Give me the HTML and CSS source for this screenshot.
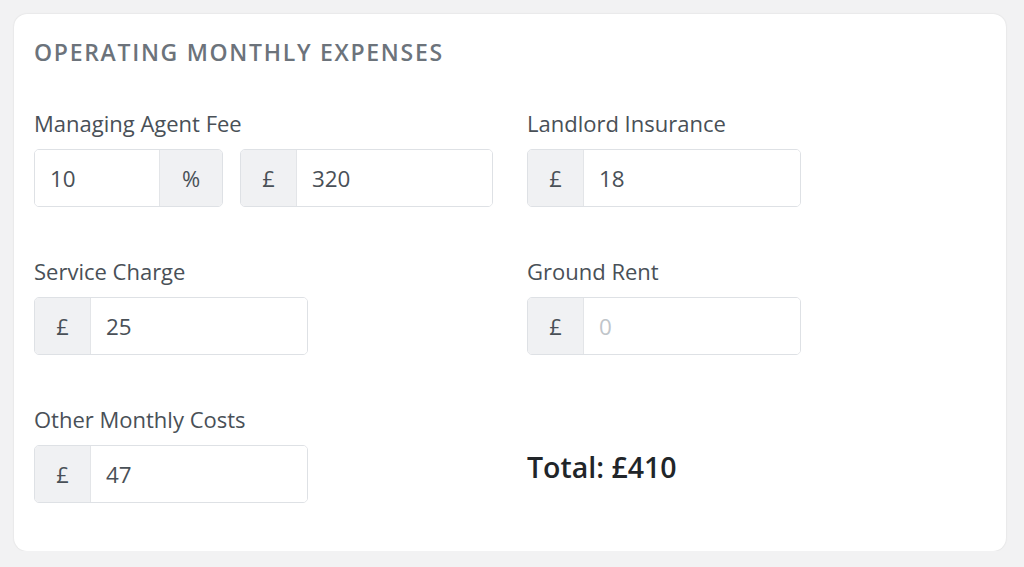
FILE: index.html
```html
<!DOCTYPE html>
<html lang="en">
<head>
    <meta charset="UTF-8">
    <meta name="viewport" content="width=device-width, initial-scale=1.0">
    <title>Operating Monthly Expenses</title>
    <link rel="stylesheet" href="styles.css">
</head>
<body>

    <div class="card">
        <h2 class="card-title">OPERATING MONTHLY EXPENSES</h2>

        <div class="fields">
            <!-- row 1 -->
            <div class="field">
                <label>Managing Agent Fee</label>
                <div class="pair">
                    <div class="input-group w-percent">
                        <input type="text" value="10">
                        <span class="addon addon-right">%</span>
                    </div>
                    <div class="input-group w-amount">
                        <span class="addon">£</span>
                        <input type="text" value="320">
                    </div>
                </div>
            </div>
            <div class="field">
                <label>Landlord Insurance</label>
                <div class="input-group w-single">
                    <span class="addon">£</span>
                    <input type="text" value="18">
                </div>
            </div>

            <!-- row 2 -->
            <div class="field">
                <label>Service Charge</label>
                <div class="input-group w-single">
                    <span class="addon">£</span>
                    <input type="text" value="25">
                </div>
            </div>
            <div class="field">
                <label>Ground Rent</label>
                <div class="input-group w-single">
                    <span class="addon">£</span>
                    <input type="text" placeholder="0">
                </div>
            </div>

            <!-- row 3 -->
            <div class="field">
                <label>Other Monthly Costs</label>
                <div class="input-group w-single">
                    <span class="addon">£</span>
                    <input type="text" value="47">
                </div>
            </div>
            <div class="field total-cell">
                <div class="total">Total: £410</div>
            </div>
        </div>
    </div>

</body>
</html>
```

FILE: styles.css
```css
body {
    margin: 0;
    padding: 0;
    background-color: #f2f2f3;
    font-family: "Open Sans", "Noto Sans", sans-serif;
}

.card {
    width: 992px;
    height: 537px;
    box-sizing: border-box;
    margin: 14px 0 0 14px;
    padding: 24px 20px 20px;
    background-color: #ffffff;
    border-radius: 13px;
    box-shadow: 0 0 2px rgba(0, 0, 0, 0.12);
}

.card-title {
    margin: 0;
    font-family: "Open Sans", sans-serif;
    font-weight: 600;
    font-size: 23px;
    line-height: 28px;
    letter-spacing: 1.7px;
    color: #6c737b;
}

.fields {
    display: grid;
    grid-template-columns: 459px 459px;
    column-gap: 34px;
    row-gap: 53px;
    margin-top: 46px;
}

.field label {
    display: block;
    font-size: 22px;
    line-height: 22px;
    color: #495057;
    margin-bottom: 15px;
}

.pair {
    display: flex;
    gap: 17px;
}

.input-group {
    display: flex;
    height: 58px;
    box-sizing: border-box;
    border: 1px solid #dee1e5;
    border-radius: 5px;
    overflow: hidden;
}

.w-percent { width: 189px; }
.w-amount { width: 253px; }
.w-single { width: 274px; }

.addon {
    width: 55px;
    flex: none;
    display: flex;
    align-items: center;
    justify-content: center;
    background-color: #f0f1f3;
    border-right: 1px solid #e3e5e8;
    font-size: 22px;
    color: #495057;
}

.addon-right {
    width: 62px;
    border-right: none;
    border-left: 1px solid #e3e5e8;
}

.input-group input {
    flex: 1;
    min-width: 0;
    border: none;
    outline: none;
    padding: 0 0 0 15px;
    font-family: "Open Sans", "Noto Sans", sans-serif;
    font-size: 22.4px;
    color: #495057;
    background: #ffffff;
}

.input-group input::placeholder {
    color: #c0c5ca;
}

.total-cell {
    display: flex;
    align-items: flex-end;
}

.total {
    font-size: 28.5px;
    font-weight: 600;
    color: #212529;
    line-height: 32px;
    margin-bottom: 20px;
}
```
